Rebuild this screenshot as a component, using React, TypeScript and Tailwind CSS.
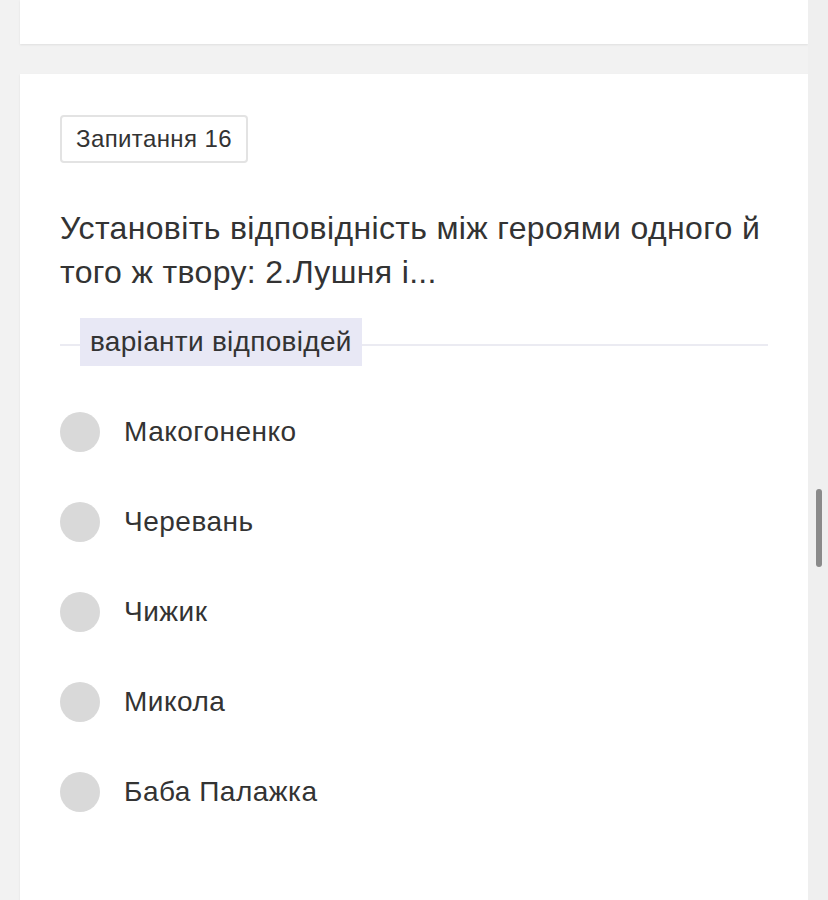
import React from 'react';

const options = ['Макогоненко', 'Черевань', 'Чижик', 'Микола', 'Баба Палажка'];

const App: React.FC = () => {
  return (
    <div
      className="min-h-[900px] bg-[#f2f2f2] px-5 text-[#333333]"
      style={{ fontFamily: '"Liberation Sans", Arial, sans-serif' }}
    >
      <div className="h-[44px] bg-white shadow-[0_1px_2px_rgba(0,0,0,0.08)]" />

      <div className="mt-[30px] h-[860px] bg-white px-10 pt-[41px] shadow-[0_1px_2px_rgba(0,0,0,0.08)]">
        <div className="inline-flex h-[48px] items-center rounded-[4px] border-2 border-[#e3e3e3] px-[14px] text-[24px] tracking-[0.4px]">
          Запитання 16
        </div>

        <p className="mt-[43px] text-[32px] leading-[44px] tracking-[0.35px]">
          Установіть відповідність між героями одного й того ж твору: 2.Лушня і...
        </p>

        <div className="relative mt-[24px] flex h-[48px] items-center">
          <div className="absolute inset-x-0 top-[26px] h-[2px] bg-[#ebebf2]" />
          <span className="relative ml-5 flex h-[48px] items-center bg-[#e8e8f5] px-[10px] text-[28px] tracking-[0.3px]">
            варіанти відповідей
          </span>
        </div>

        <div className="mt-[46px] flex flex-col gap-[50px]">
          {options.map((o) => (
            <div key={o} className="flex h-10 items-center">
              <div className="h-10 w-10 shrink-0 rounded-full bg-[#d9d9d9]" />
              <span className="ml-6 text-[28px] leading-[40px] tracking-[0.5px]">{o}</span>
            </div>
          ))}
        </div>
      </div>

      <div className="fixed right-0 top-0 h-[900px] w-5 bg-[#efefef]">
        <div className="absolute left-[8px] top-[489px] h-[78px] w-[6px] rounded-full bg-[#8a8a8a]" />
      </div>
    </div>
  );
};

export default App;
